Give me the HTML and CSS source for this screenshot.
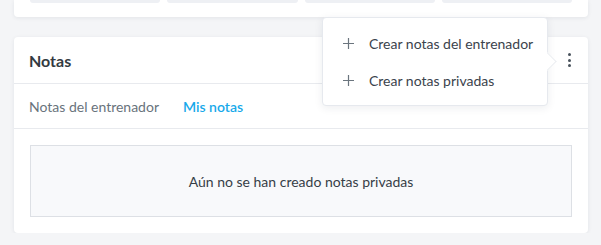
FILE: index.html
```html
<!DOCTYPE html>
<html lang="es">
<head>
    <meta charset="UTF-8">
    <meta name="viewport" content="width=device-width, initial-scale=1.0">
    <title>Notas</title>
    <link rel="stylesheet" href="styles.css">
</head>
<body>

<div class="page">
    <div class="card stats-card">
        <div class="stat-tile"></div>
        <div class="stat-tile"></div>
        <div class="stat-tile"></div>
        <div class="stat-tile"></div>
    </div>

    <div class="card notes-card">
        <div class="card-header">
            <h2 class="card-title">Notas</h2>
            <button class="kebab" aria-label="Más opciones">
                <span></span><span></span><span></span>
            </button>
        </div>

        <div class="tabs">
            <a class="tab">Notas del entrenador</a>
            <a class="tab active">Mis notas</a>
        </div>

        <div class="card-body">
            <div class="empty-box">Aún no se han creado notas privadas</div>
        </div>

        <!-- dropdown abierto desde el menu de tres puntos -->
        <div class="menu">
            <div class="menu-item">
                <svg class="plus" width="11" height="11" viewBox="0 0 11 11"><path d="M5.5 0v11M0 5.5h11" stroke="currentColor" stroke-width="1.2" fill="none"/></svg>
                Crear notas del entrenador
            </div>
            <div class="menu-item">
                <svg class="plus" width="11" height="11" viewBox="0 0 11 11"><path d="M5.5 0v11M0 5.5h11" stroke="currentColor" stroke-width="1.2" fill="none"/></svg>
                Crear notas privadas
            </div>
        </div>
    </div>
</div>

</body>
</html>
```

FILE: styles.css
```css
body {
    margin: 0;
    font-family: Lato, "Open Sans", Arial, sans-serif;
    background-color: #f4f5f7;
    color: #3b434c;
}

.page {
    padding: 0 13px 0 14px;
}

.card {
    background-color: #fff;
    border-radius: 4px;
    box-shadow: 0 1px 4px rgba(30, 40, 60, 0.08);
}

.stats-card {
    display: flex;
    gap: 7px;
    padding: 0 16px 14px;
    border-top-left-radius: 0;
    border-top-right-radius: 0;
}

.stat-tile {
    flex: 1;
    height: 3px;
    background-color: #eef0f4;
    border-radius: 0 0 4px 4px;
}

.notes-card {
    position: relative;
    margin-top: 20px;
}

.card-header {
    display: flex;
    align-items: center;
    justify-content: space-between;
    height: 46px;
    padding: 0 10px 0 15px;
    border-bottom: 1px solid #e8eaee;
}

.card-title {
    margin: 0;
    font-size: 16px;
    font-weight: 700;
    color: #333a41;
}

.kebab {
    display: flex;
    flex-direction: column;
    align-items: center;
    gap: 2.5px;
    width: 18px;
    padding: 0;
    border: none;
    background: none;
}

.kebab span {
    width: 3px;
    height: 3px;
    border-radius: 50%;
    background-color: #48525c;
}

.tabs {
    display: flex;
    align-items: center;
    gap: 24px;
    height: 44px;
    padding: 0 15px;
    border-bottom: 1px solid #e8eaee;
    font-size: 14px;
}

.tab {
    color: #69737c;
}

.tab.active {
    color: #17a9ea;
    font-weight: 600;
}

.card-body {
    padding: 16px;
}

.empty-box {
    display: flex;
    align-items: center;
    justify-content: center;
    height: 70px;
    background-color: #f8f9fb;
    border: 1px solid #dde0e5;
    font-size: 14px;
    color: #363e47;
}

.menu {
    position: absolute;
    top: -20px;
    left: 308px;
    width: 224px;
    padding: 7px 0 6px;
    background-color: #fff;
    border: 1px solid #e6e9ee;
    border-radius: 4px;
    box-shadow: 0 2px 8px rgba(30, 40, 60, 0.08);
}

.menu::after {
    content: "";
    position: absolute;
    top: 37px;
    right: -7px;
    width: 12px;
    height: 12px;
    background-color: #fff;
    border-top: 1px solid #eceef2;
    border-right: 1px solid #eceef2;
    transform: rotate(45deg);
}

.menu-item {
    display: flex;
    align-items: center;
    gap: 15px;
    height: 37px;
    padding: 0 20px;
    font-size: 14px;
    white-space: nowrap;
    color: #3b434c;
}

.plus {
    flex-shrink: 0;
    color: #6b757e;
}
```
